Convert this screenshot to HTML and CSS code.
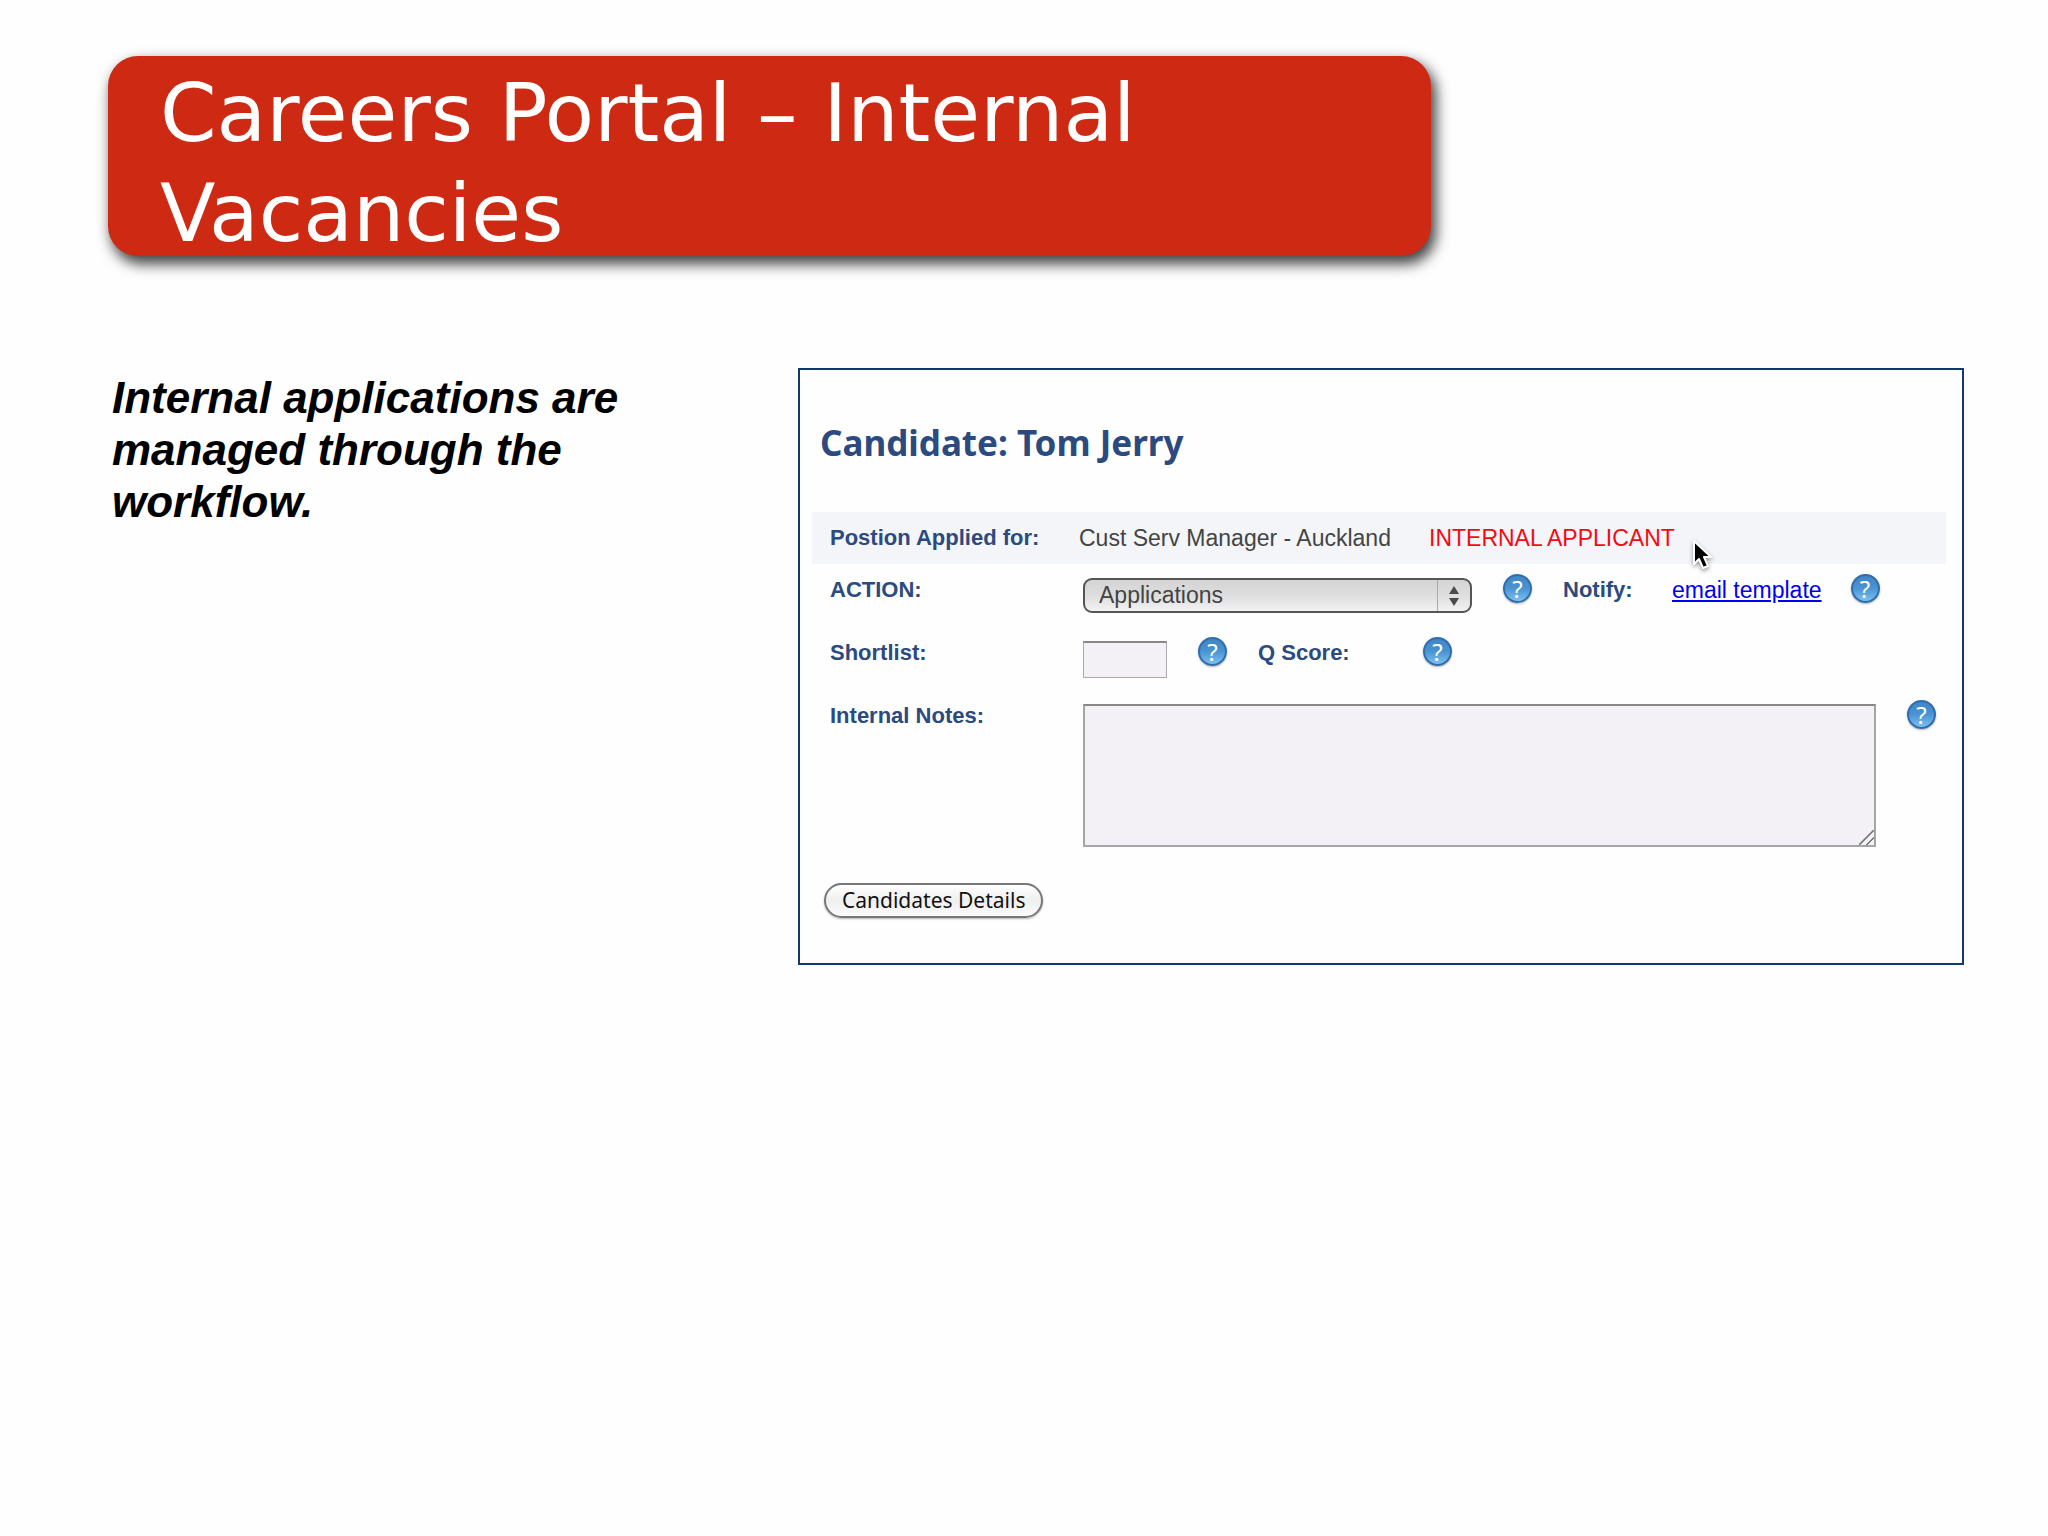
FILE: index.html
```html
<!DOCTYPE html>
<html lang="en">

<head>
  <meta charset="UTF-8" />
  <meta name="viewport" content="width=device-width, initial-scale=1.0" />
  <title>Careers Portal – Internal Vacancies</title>
  <link rel="stylesheet" href="styles.css">
</head>

<body>
  <header class="banner">
    <h1 class="banner-title">Careers Portal – Internal Vacancies</h1>
  </header>

  <main class="content">
    <p class="intro">Internal applications are managed through the workflow.</p>

    <section class="panel">
      <h2 class="panel-title">Candidate: Tom Jerry</h2>

      <form class="candidate-form">
        <div class="row row-shaded">
          <span class="label label-position">Postion Applied for:</span>
          <span class="position">Cust Serv Manager - Auckland</span>
          <span class="flag">INTERNAL APPLICANT</span>
          <svg class="cursor" viewBox="0 0 22 32" aria-hidden="true">
            <path d="M2 2 V25 L7 20 L11 29 L16 27 L12 18 H19 Z" fill="#000" stroke="#fff" stroke-width="2" stroke-linejoin="round" />
          </svg>
        </div>

        <div class="row">
          <label class="label" for="action">ACTION:</label>
          <div class="select-box">
            <select class="select" id="action" name="action">
              <option>Applications</option>
            </select>
            <svg class="arrows" viewBox="0 0 12 20" aria-hidden="true">
              <path d="M6 0 L11 8 H1 Z M6 20 L11 12 H1 Z" fill="#4a4a4a" />
            </svg>
          </div>
          <button class="help help-action" type="button" aria-label="Help with action">?</button>
          <span class="label label-notify">Notify:</span>
          <a class="link" href="#">email template</a>
          <button class="help help-notify" type="button" aria-label="Help with notify">?</button>
        </div>

        <div class="row">
          <label class="label" for="shortlist">Shortlist:</label>
          <input class="input" type="text" id="shortlist" name="shortlist" />
          <button class="help help-shortlist" type="button" aria-label="Help with shortlist">?</button>
          <span class="label label-score">Q Score:</span>
          <button class="help" type="button" aria-label="Help with Q score">?</button>
        </div>

        <div class="row">
          <label class="label" for="notes">Internal Notes:</label>
          <textarea class="textinput" id="notes" name="notes"></textarea>
          <button class="help help-notes" type="button" aria-label="Help with internal notes">?</button>
        </div>

        <button class="details" type="button">Candidates Details</button>
      </form>
    </section>
  </main>
</body>

</html>
```

FILE: styles.css
```css
* {
  box-sizing: border-box;
}

body {
  margin: 0;
  padding: 56px 84px 56px 108px;
  background: #fefefe;
  font-family: "Liberation Sans", Arial, sans-serif;
}

/* Banner */
.banner {
  display: flex;
  width: 71.3%;
  padding: 7px 52px 0;
  background: #ce2a13;
  border-radius: 30px;
  box-shadow: 4px 7px 14px 1px rgba(0, 0, 0, 0.75);
}

.banner-title {
  margin: 0 0 -7px;
  color: #fff;
  font-family: "DejaVu Sans", Verdana, sans-serif;
  font-size: 81px;
  font-weight: 400;
  line-height: 100px;
}

/* Content */
.content {
  display: grid;
  grid-template-columns: 568fr 1166fr;
  gap: 118px;
  align-items: start;
  margin-top: 112px;
  padding-left: 4px;
}

.intro {
  margin: 4px 0 0;
  color: #000;
  font-size: 44px;
  font-style: italic;
  font-weight: bold;
  line-height: 52px;
}

.panel {
  padding: 49px 16px 45px 12px;
  border: 2px solid #12396b;
}

.panel-title {
  margin: 0 0 45px;
  padding-left: 8px;
  color: #2a4a80;
  font-family: "Noto Sans", "Open Sans", sans-serif;
  font-size: 35px;
  font-weight: bold;
  line-height: 48px;
}

/* Form rows */
.row {
  display: flex;
  align-items: flex-start;
  min-height: 63px;
  padding: 10px 10px 0 18px;
  font-size: 23px;
  line-height: 24px;
}

.row-shaded {
  position: relative;
  min-height: 52px;
  background: #f3f5f9;
}

.label {
  width: 253px;
  margin-top: 4px;
  color: #2a4a80;
  font-size: 22px;
  font-weight: bold;
  white-space: nowrap;
}

.label-position {
  width: 249px;
}

.position {
  width: 350px;
  margin-top: 4px;
  color: #444;
}

.flag {
  margin-top: 4px;
  color: #f50a14;
}

.cursor {
  position: absolute;
  top: 27px;
  left: 880px;
  width: 22px;
  height: 32px;
  filter: drop-shadow(0 2px 2px rgba(0, 0, 0, 0.4));
}

.select-box {
  position: relative;
  width: 389px;
  height: 35px;
  margin-top: 4px;
}

.select {
  width: 100%;
  height: 100%;
  padding: 0 40px 2px 14px;
  border: 2px solid #555;
  border-radius: 9px;
  background: linear-gradient(90deg, transparent 352px, #aaa 352px, #aaa 353px, transparent 353px), linear-gradient(#d4d4d4, #dedede 50%, #f2f2f2);
  color: #444;
  font-family: inherit;
  font-size: 23px;
  appearance: none;
}

.arrows {
  position: absolute;
  top: 8px;
  right: 12px;
  width: 12px;
  height: 20px;
  pointer-events: none;
}

.label-notify {
  width: 109px;
}

.label-score {
  width: 165px;
}

.link {
  margin-top: 4px;
  color: #0000f0;
  text-decoration: underline;
}

.input,
.textinput {
  border: 1px solid #aaa;
  border-top: 2px solid #888;
  border-radius: 0;
  background: #f3f1f5;
  font-family: inherit;
  font-size: 23px;
}

.input {
  width: 84px;
  height: 37px;
  margin-top: 4px;
}

.textinput {
  flex: 1;
  min-width: 0;
  height: 143px;
  margin-top: 4px;
  border: 2px solid #a5a5a8;
  border-top-color: #888;
}

.textinput::-webkit-resizer {
  background: linear-gradient(135deg, transparent 46%, #777 47%, #777 53%, transparent 54%, transparent 70%, #777 71%, #777 77%, transparent 78%);
}

.label,
.position,
.select-box,
.input {
  flex: none;
}

/* Round help buttons */
.help {
  flex: none;
  width: 29px;
  height: 29px;
  padding: 0;
  border: 2px solid #2f6dad;
  border-radius: 50%;
  background: linear-gradient(#3f86c6, #4a94d4 50%, #7cc0ee);
  box-shadow: 0 1px 2px rgba(0, 0, 0, 0.3);
  color: #fff;
  font-family: "Noto Sans", "Open Sans", sans-serif;
  font-size: 24px;
  line-height: 24px;
}

.help-action,
.help-shortlist {
  margin: 0 31px;
}

.help-notify {
  margin-left: 29px;
}

.help-notes {
  margin-left: 31px;
}

.details {
  display: block;
  height: 35px;
  margin: 36px 0 0 12px;
  padding: 0 16px 2px;
  border: 2px solid #777;
  border-radius: 18px;
  background: linear-gradient(#fff, #efefef 50%, #fbfbfb);
  box-shadow: 0 1px 2px rgba(0, 0, 0, 0.3);
  color: #111;
  font-family: "Noto Sans", "Open Sans", sans-serif;
  font-size: 21px;
  line-height: 28px;
}

/* Responsive */
@media (max-width: 1500px) {
  body {
    padding: 30px;
  }

  .banner {
    width: 100%;
  }

  .content {
    grid-template-columns: 1fr;
    gap: 40px;
    margin-top: 50px;
  }
}
```
